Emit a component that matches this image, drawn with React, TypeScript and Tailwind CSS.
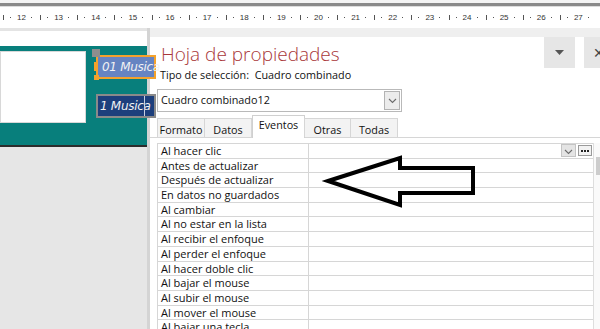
import React from "react";

const rulerNums = [12, 13, 14, 15, 16, 17, 18, 19, 20, 21, 22, 23, 24, 25, 26, 27];

const rows = [
  "Al hacer clic",
  "Antes de actualizar",
  "Después de actualizar",
  "En datos no guardados",
  "Al cambiar",
  "Al no estar en la lista",
  "Al recibir el enfoque",
  "Al perder el enfoque",
  "Al hacer doble clic",
  "Al bajar el mouse",
  "Al subir el mouse",
  "Al mover el mouse",
  "Al bajar una tecla",
];

const tabs = [
  { label: "Formato", w: "w-[48px]" },
  { label: "Datos", w: "w-[48px]" },
  { label: "Eventos", w: "w-[53px]", active: true },
  { label: "Otras", w: "w-[47px]" },
  { label: "Todas", w: "w-[48px]" },
];

function Chevron({ className = "" }: { className?: string }) {
  return (
    <svg width="9" height="6" viewBox="0 0 9 6" className={className}>
      <path d="M1 1 L4.5 4.5 L8 1" fill="none" stroke="#6b6b6b" strokeWidth="1.1" />
    </svg>
  );
}

export default function App() {
  return (
    <div className="relative w-[600px] h-[329px] overflow-hidden bg-[#e6e6e6] flex flex-col font-['Open_Sans',sans-serif]">
      {/* top border */}
      <div className="h-[3px] bg-[#f4f4f4] shrink-0" />
      <div className="h-[3px] bg-[#8a8a8a] shrink-0" />
      <div className="h-[1px] bg-[#dcdcdc] shrink-0" />
      {/* ruler */}
      <div className="h-[21px] bg-white flex items-center pl-[3px] shrink-0 font-['Liberation_Sans',sans-serif] text-[8px] text-[#333]">
        {rulerNums.map((n) => (
          <div key={n} className="flex items-center w-[37.13px] shrink-0">
            <div className="w-[1px] h-[5px] bg-[#555]" />
            <div className="w-[6px]" />
            <div className="w-[1px] h-[1px] bg-[#555]" />
            <div className="w-[5px]" />
            <div className="w-[11px] flex justify-center leading-none">{n}</div>
            <div className="w-[4px]" />
            <div className="w-[1px] h-[1px] bg-[#555]" />
          </div>
        ))}
      </div>

      <div className="flex flex-1 min-h-0">
        {/* design area */}
        <div className="w-[147px] shrink-0 flex flex-col">
          <div className="h-[3px] bg-[#e4e4e4]" />
          <div className="h-[15px] bg-white" />
          <div className="relative h-[99px] bg-[#087f7c]">
            <div className="absolute left-0 top-[5px] w-[86px] h-[72px] bg-white border border-[#d8d8d8]" />
            {/* selected control */}
            <div className="absolute left-[96px] top-[9px] w-[60px] h-[24px] border-2 border-[#f4a22c] bg-[#6684c2] flex items-center pl-[4px] text-[12px] italic text-[#f2f2f2] font-['DejaVu_Sans',sans-serif] whitespace-nowrap tracking-[-0.3px]">
              01 Musica
            </div>
            <div className="absolute left-[92px] top-[3px] w-[8px] h-[8px] bg-[#8e8e8e]" />
            <div className="absolute left-[94px] top-[16px] w-[4px] h-[9px] bg-[#f4a22c]" />
            <div className="absolute left-[94px] top-[29px] w-[5px] h-[5px] bg-[#f4a22c]" />
            {/* second control */}
            <div className="absolute left-[96px] top-[48px] w-[60px] h-[24px] border-2 border-[#8a8a8a] bg-[#1d3f7c] flex items-center pl-[2px] text-[12px] italic text-[#f2f2f2] font-['DejaVu_Sans',sans-serif] whitespace-nowrap tracking-[-0.3px]">
              1 Musica
            </div>
            <div className="absolute left-[144px] top-[50px] w-[1px] h-[20px] bg-[#c8d0e0]" />
          </div>
          <div className="h-[2px] bg-[#2c2c2c]" />
          <div className="flex-1 bg-[#e6e6e6]" />
        </div>

        {/* property sheet */}
        <div className="w-[470px] shrink-0 border-l-[3px] border-[#d4d4d4] bg-[#efefef] flex flex-col">
          <div className="h-[9px] shrink-0" />
          <div className="flex-1 bg-white flex flex-col text-[10.8px] text-[#111]">
            {/* header */}
            <div className="flex h-[31px] shrink-0">
              <div className="w-[394px] pl-[11px] pt-[4px] text-[19px] leading-[26px] font-light text-[#a9373a] whitespace-nowrap">
                Hoja de propiedades
              </div>
              <div className="w-[31px] h-[31px] bg-[#e6e6e6] flex items-center justify-center">
                <svg width="9" height="5" viewBox="0 0 9 5">
                  <path d="M0 0 H9 L4.5 5 Z" fill="#555" />
                </svg>
              </div>
              <div className="w-[9px]" />
              <div className="w-[30px] h-[31px] bg-[#e6e6e6] flex items-center justify-center text-[14px] text-[#444]">
                ✕
              </div>
            </div>
            {/* tipo */}
            <div className="pl-[10px] h-[14px] leading-[14px] whitespace-nowrap shrink-0">
              Tipo de selección:&nbsp;&nbsp;Cuadro combinado
            </div>
            {/* combo */}
            <div className="ml-[7px] mt-[7px] w-[245px] h-[23px] border border-[#b9b9b9] flex items-center shrink-0">
              <div className="flex-1 pl-[3px] whitespace-nowrap">Cuadro combinado12</div>
              <div className="w-[16px] h-[19px] mr-[1px] border border-[#b3b3b3] bg-[#ececec] flex items-center justify-center">
                <Chevron />
              </div>
            </div>
            {/* tabs */}
            <div className="mt-[3px] h-[23px] flex items-end border-b border-[#d6d6d6] pl-[7px] shrink-0">
              {tabs.map((t) =>
                t.active ? (
                  <div
                    key={t.label}
                    className={`${t.w} h-[23px] -mb-[1px] bg-white border border-b-0 border-[#d0d0d0] flex justify-center pt-[2px] leading-[14px]`}
                  >
                    {t.label}
                  </div>
                ) : (
                  <div
                    key={t.label}
                    className={`${t.w} h-[19px] bg-[#f3f3f3] border-l border-r border-t border-[#d6d6d6] -ml-[1px] first:ml-0 flex justify-center pt-[4px] leading-[14px]`}
                  >
                    {t.label}
                  </div>
                )
              )}
            </div>
            {/* grid */}
            <div className="flex mt-[5px] pl-[7px] text-[11px]">
              <div className="w-[436px] border-t border-l border-[#d6d6d6]">
                {rows.map((r, i) => (
                  <div key={r} className="flex h-[14.7px] border-b border-[#d6d6d6]">
                    <div className="w-[151px] border-r border-[#d6d6d6] pl-[3px] leading-[13.7px] whitespace-nowrap overflow-hidden">
                      {r}
                    </div>
                    <div className="flex-1 flex items-center justify-end pr-[1px] gap-[2px]">
                      {i === 0 && (
                        <>
                          <div className="w-[15px] h-[13px] border border-[#c4c4c4] bg-[#e4e4e4] flex items-end justify-center pb-[1px]">
                            <Chevron />
                          </div>
                          <div className="w-[14px] h-[11px] border border-[#9a9a9a] bg-[#f2f2f2] flex items-center justify-center gap-[1px]">
                            <div className="w-[2px] h-[2px] bg-[#222]" />
                            <div className="w-[2px] h-[2px] bg-[#222]" />
                            <div className="w-[2px] h-[2px] bg-[#222]" />
                          </div>
                        </>
                      )}
                    </div>
                  </div>
                ))}
              </div>
              <div className="w-[8px] border-l border-[#dedede] bg-[#fafafa] pt-[14px] pl-[2px]">
                <div className="w-[5px] h-[18px] bg-[#cdcdcd]" />
              </div>
            </div>
          </div>
        </div>
      </div>

      {/* annotation arrow */}
      <svg className="absolute left-0 top-0 pointer-events-none" width="600" height="329" viewBox="0 0 600 329">
        <polygon
          points="328,181 400,158 400,168 473,168 473,193 400,193 400,205"
          fill="none"
          stroke="#000"
          strokeWidth="4"
          strokeLinejoin="miter"
        />
      </svg>
    </div>
  );
}
